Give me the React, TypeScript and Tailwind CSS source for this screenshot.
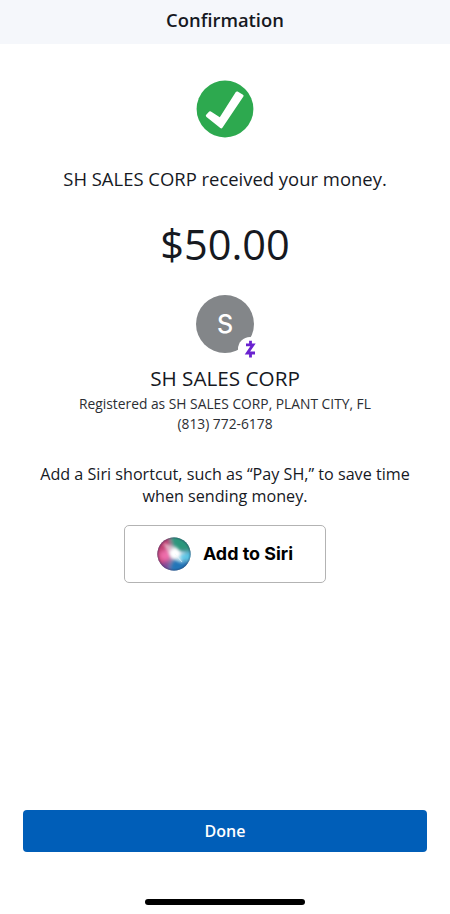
type SiriButtonProps = {
  label: string;
};

function CheckBadge() {
  return (
    <svg width="58" height="58" viewBox="0 0 58 58" aria-hidden="true">
      <circle cx="29" cy="29" r="28.4" fill="#2da94f" />
      <path
        d="M10.2 34.8 13.2 31.6Q14 30.8 14.9 31.5L23.8 37.3 39.8 12Q40.6 11 41.6 11.6L47 14.8Q48 15.5 47.4 16.5L26.4 47.8Q25.5 49 24.3 48.1L10.5 36.9Q9.2 35.9 10.2 34.8Z"
        fill="#fff"
      />
    </svg>
  );
}

function ZelleMark() {
  return (
    <svg width="24" height="24" viewBox="0 0 24 24" aria-hidden="true">
      <circle cx="12" cy="12" r="12" fill="#fff" />
      <path
        d="M8 7.9H15L9.4 16H17M12.5 3.8V7.9M12.5 16V20.4"
        fill="none"
        stroke="#6a22d0"
        strokeWidth="2.8"
      />
    </svg>
  );
}

function SiriOrb() {
  return (
    <svg width="34" height="34" viewBox="0 0 34 34" aria-hidden="true">
      <defs>
        <clipPath id="orb">
          <circle cx="17" cy="17" r="16.6" />
        </clipPath>
        <filter id="soft" x="-50%" y="-50%" width="200%" height="200%">
          <feGaussianBlur stdDeviation="2.2" />
        </filter>
        <filter id="glow" x="-50%" y="-50%" width="200%" height="200%">
          <feGaussianBlur stdDeviation="1.7" />
        </filter>
        <radialGradient id="rim" cx="50%" cy="50%" r="50%">
          <stop offset="86%" stopColor="#2a3158" stopOpacity="0" />
          <stop offset="100%" stopColor="#2a3158" stopOpacity="0.4" />
        </radialGradient>
      </defs>
      <g clipPath="url(#orb)">
        <rect width="34" height="34" fill="#7c8ca8" />
        <g filter="url(#soft)">
          <path d="M-4 -4H11L15 17 8 38H-4Z" fill="#bf3c70" />
          <path d="M12 -4H38V14L18 14Z" fill="#2b977c" />
          <path d="M38 14V27L18 18Z" fill="#4fc4e4" />
          <path d="M10 38 17 21 38 27V38Z" fill="#2474b8" />
          <path d="M-2 30 12 23 12 38H2Z" fill="#80489a" />
          <ellipse cx="8.5" cy="18.5" rx="6" ry="5.5" fill="#ee6dab" />
          <ellipse cx="25" cy="20" rx="4.5" ry="4" fill="#6bd0ee" />
        </g>
        <g filter="url(#glow)" fill="#fff">
          <ellipse cx="18" cy="16.5" rx="5.5" ry="5" />
          <path d="M6 6 20 10 26 26 14 22Z" opacity="0.55" />
          <path d="M16 13 30 16 17 20Z" opacity="0.6" />
        </g>
        <path d="M18 17 25 25" stroke="#eafaff" strokeWidth="1" opacity="0.6" />
      </g>
      <circle cx="17" cy="17" r="16.6" fill="url(#rim)" />
    </svg>
  );
}

function SiriButton({ label }: SiriButtonProps) {
  return (
    <button className="mt-[18px] flex h-[58px] w-[202px] items-center justify-center gap-3 rounded-[5px] border border-[#b3b3b3] bg-white font-['Inter',sans-serif] text-[17.9px] font-bold text-black">
      <SiriOrb />
      <span>{label}</span>
    </button>
  );
}

export default function App() {
  return (
    <div className="flex h-[914px] w-[450px] flex-col items-center bg-white font-['Open_Sans',sans-serif] text-[#16191f]">
      <header className="flex h-11 w-full justify-center bg-[#f5f7fb] pt-2">
        <h1 className="text-[18.4px] leading-6 font-semibold">Confirmation</h1>
      </header>

      <main className="flex w-full flex-1 flex-col items-center text-center">
        <div className="mt-9">
          <CheckBadge />
        </div>
        <p className="mt-[29px] text-[18.45px] leading-6">SH SALES CORP received your money.</p>
        <p className="mt-[25px] text-[41.5px] leading-[56px]">$50.00</p>

        <div className="relative mt-[23px] flex size-[58px] items-center justify-center rounded-full bg-[#838689] pt-0.5 font-['Inter',sans-serif] text-[25px] font-medium text-white">
          S
          <div className="absolute top-[42px] left-[42px]">
            <ZelleMark />
          </div>
        </div>

        <h2 className="mt-[11px] text-[20.7px] leading-7">SH SALES CORP</h2>
        <p className="mt-0.5 text-[13.8px] leading-5 text-[#2b2e33]">
          Registered as SH SALES CORP, PLANT CITY, FL
        </p>
        <p className="text-[13.8px] leading-5 text-[#2b2e33]">(813) 772-6178</p>

        <p className="mt-[29px] text-[16.15px] leading-[22px]">
          Add a Siri shortcut, such as “Pay SH,” to save time
          <br />
          when sending money.
        </p>
        <SiriButton label="Add to Siri" />
      </main>

      <footer className="flex w-full flex-col items-center px-[23px] pb-[9px]">
        <button className="h-[42px] w-full rounded bg-[#005eb8] text-[16px] font-semibold text-white">
          Done
        </button>
        <div className="mt-[47px] h-1.5 w-40 rounded-full bg-black" />
      </footer>
    </div>
  );
}
